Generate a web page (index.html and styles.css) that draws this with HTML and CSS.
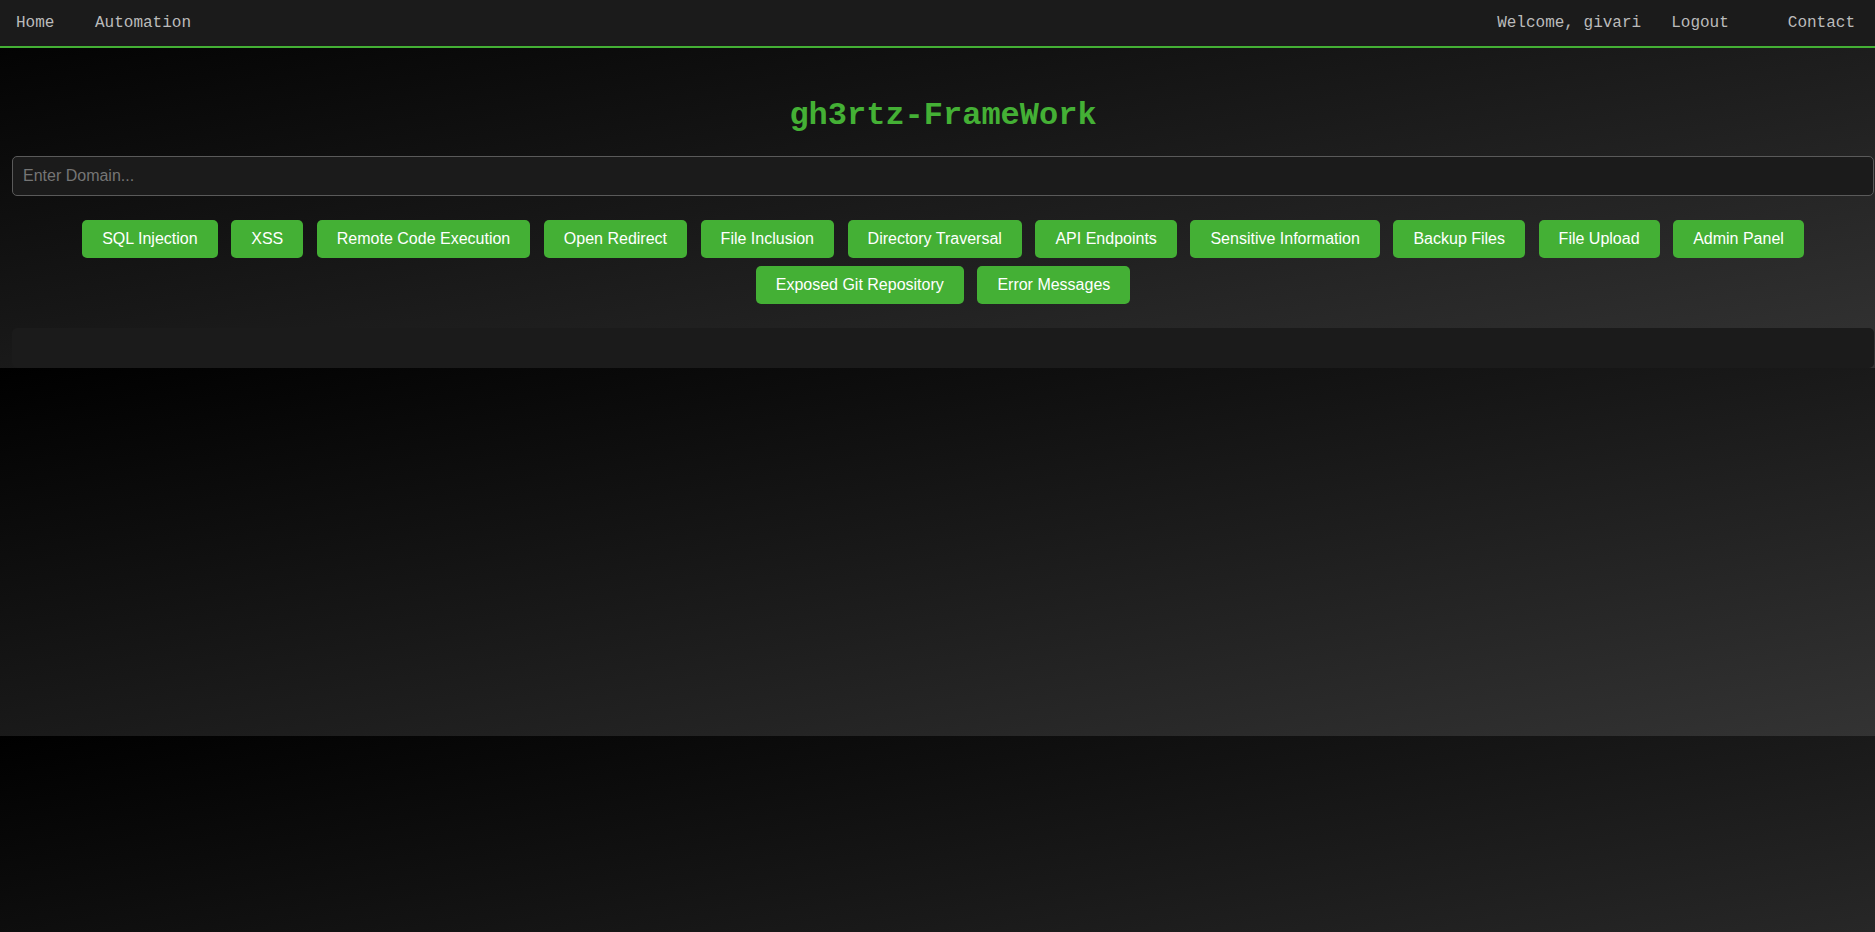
FILE: index.html
```html
<!DOCTYPE html>
<html lang="en">
<head>
<meta charset="utf-8">
<title>gh3rtz-FrameWork</title>
<link rel="stylesheet" href="styles.css">
</head>
<body>
<nav class="nav">
  <div class="nav-left">
    <a class="nav-link" href="#">Home</a>
    <a class="nav-link" href="#">Automation</a>
  </div>
  <div class="nav-right">
    <span class="nav-welcome">Welcome, givari</span>
    <a class="nav-link nav-logout" href="#">Logout</a>
    <a class="nav-link" href="#">Contact</a>
  </div>
</nav>
<main class="main">
  <h1 class="title">gh3rtz-FrameWork</h1>
  <input class="domain" type="text" placeholder="Enter Domain...">
  <div class="actions">
    <button class="btn">SQL Injection</button>
    <button class="btn">XSS</button>
    <button class="btn">Remote Code Execution</button>
    <button class="btn">Open Redirect</button>
    <button class="btn">File Inclusion</button>
    <button class="btn">Directory Traversal</button>
    <button class="btn">API Endpoints</button>
    <button class="btn">Sensitive Information</button>
    <button class="btn">Backup Files</button>
    <button class="btn">File Upload</button>
    <button class="btn">Admin Panel</button>
    <button class="btn">Exposed Git Repository</button>
    <button class="btn">Error Messages</button>
  </div>
  <div class="results"></div>
</main>
</body>
</html>
```
FILE: styles.css
```css
html {
  margin: 0;
  padding: 0;
}
body {
  margin: 0;
  padding: 0;
  background: linear-gradient(to bottom right, #000000, #333333);
  font-family: "Liberation Sans", Arial, sans-serif;
}
.nav {
  display: flex;
  justify-content: space-between;
  align-items: center;
  background: #1b1b1b;
  border-bottom: 2px solid #44b035;
  padding: 14px 20px 14px 16px;
  font-family: "Liberation Mono", "Courier New", monospace;
  font-size: 16px;
  line-height: 18px;
}
.nav-left {
  display: flex;
  gap: 40.6px;
}
.nav-right {
  display: flex;
  align-items: center;
}
.nav-link {
  color: #bbbbbb;
  text-decoration: none;
}
.nav-welcome {
  color: #bbbbbb;
  margin-right: 30px;
}
.nav-logout {
  margin-right: 59px;
}
.main {
  padding: 50.4px 1px 0 12px;
}
.title {
  margin: 0 0 21.5px;
  text-align: center;
  font-family: "Liberation Mono", "Courier New", monospace;
  font-weight: bold;
  font-size: 32px;
  line-height: 36.3px;
  color: #44b035;
}
.domain {
  display: block;
  box-sizing: border-box;
  width: 100%;
  height: 40px;
  margin: 0;
  padding: 10px;
  background: #1b1b1b;
  border: 1px solid #5a5a5a;
  border-radius: 5px;
  color: #dddddd;
  font-family: "Liberation Sans", Arial, sans-serif;
  font-size: 16px;
  outline: none;
}
.domain::placeholder {
  color: #757575;
}
.actions {
  display: flex;
  flex-wrap: wrap;
  justify-content: center;
  gap: 8px 13.6px;
  margin-top: 24px;
}
.btn {
  background: #44b035;
  color: #ffffff;
  border: none;
  border-radius: 5px;
  padding: 10px 20px;
  font-family: "Liberation Sans", Arial, sans-serif;
  font-size: 16px;
  line-height: 18px;
  cursor: pointer;
}
.results {
  margin-top: 24px;
  height: 40px;
  background: #1b1b1b;
  border-radius: 5px;
}
```
